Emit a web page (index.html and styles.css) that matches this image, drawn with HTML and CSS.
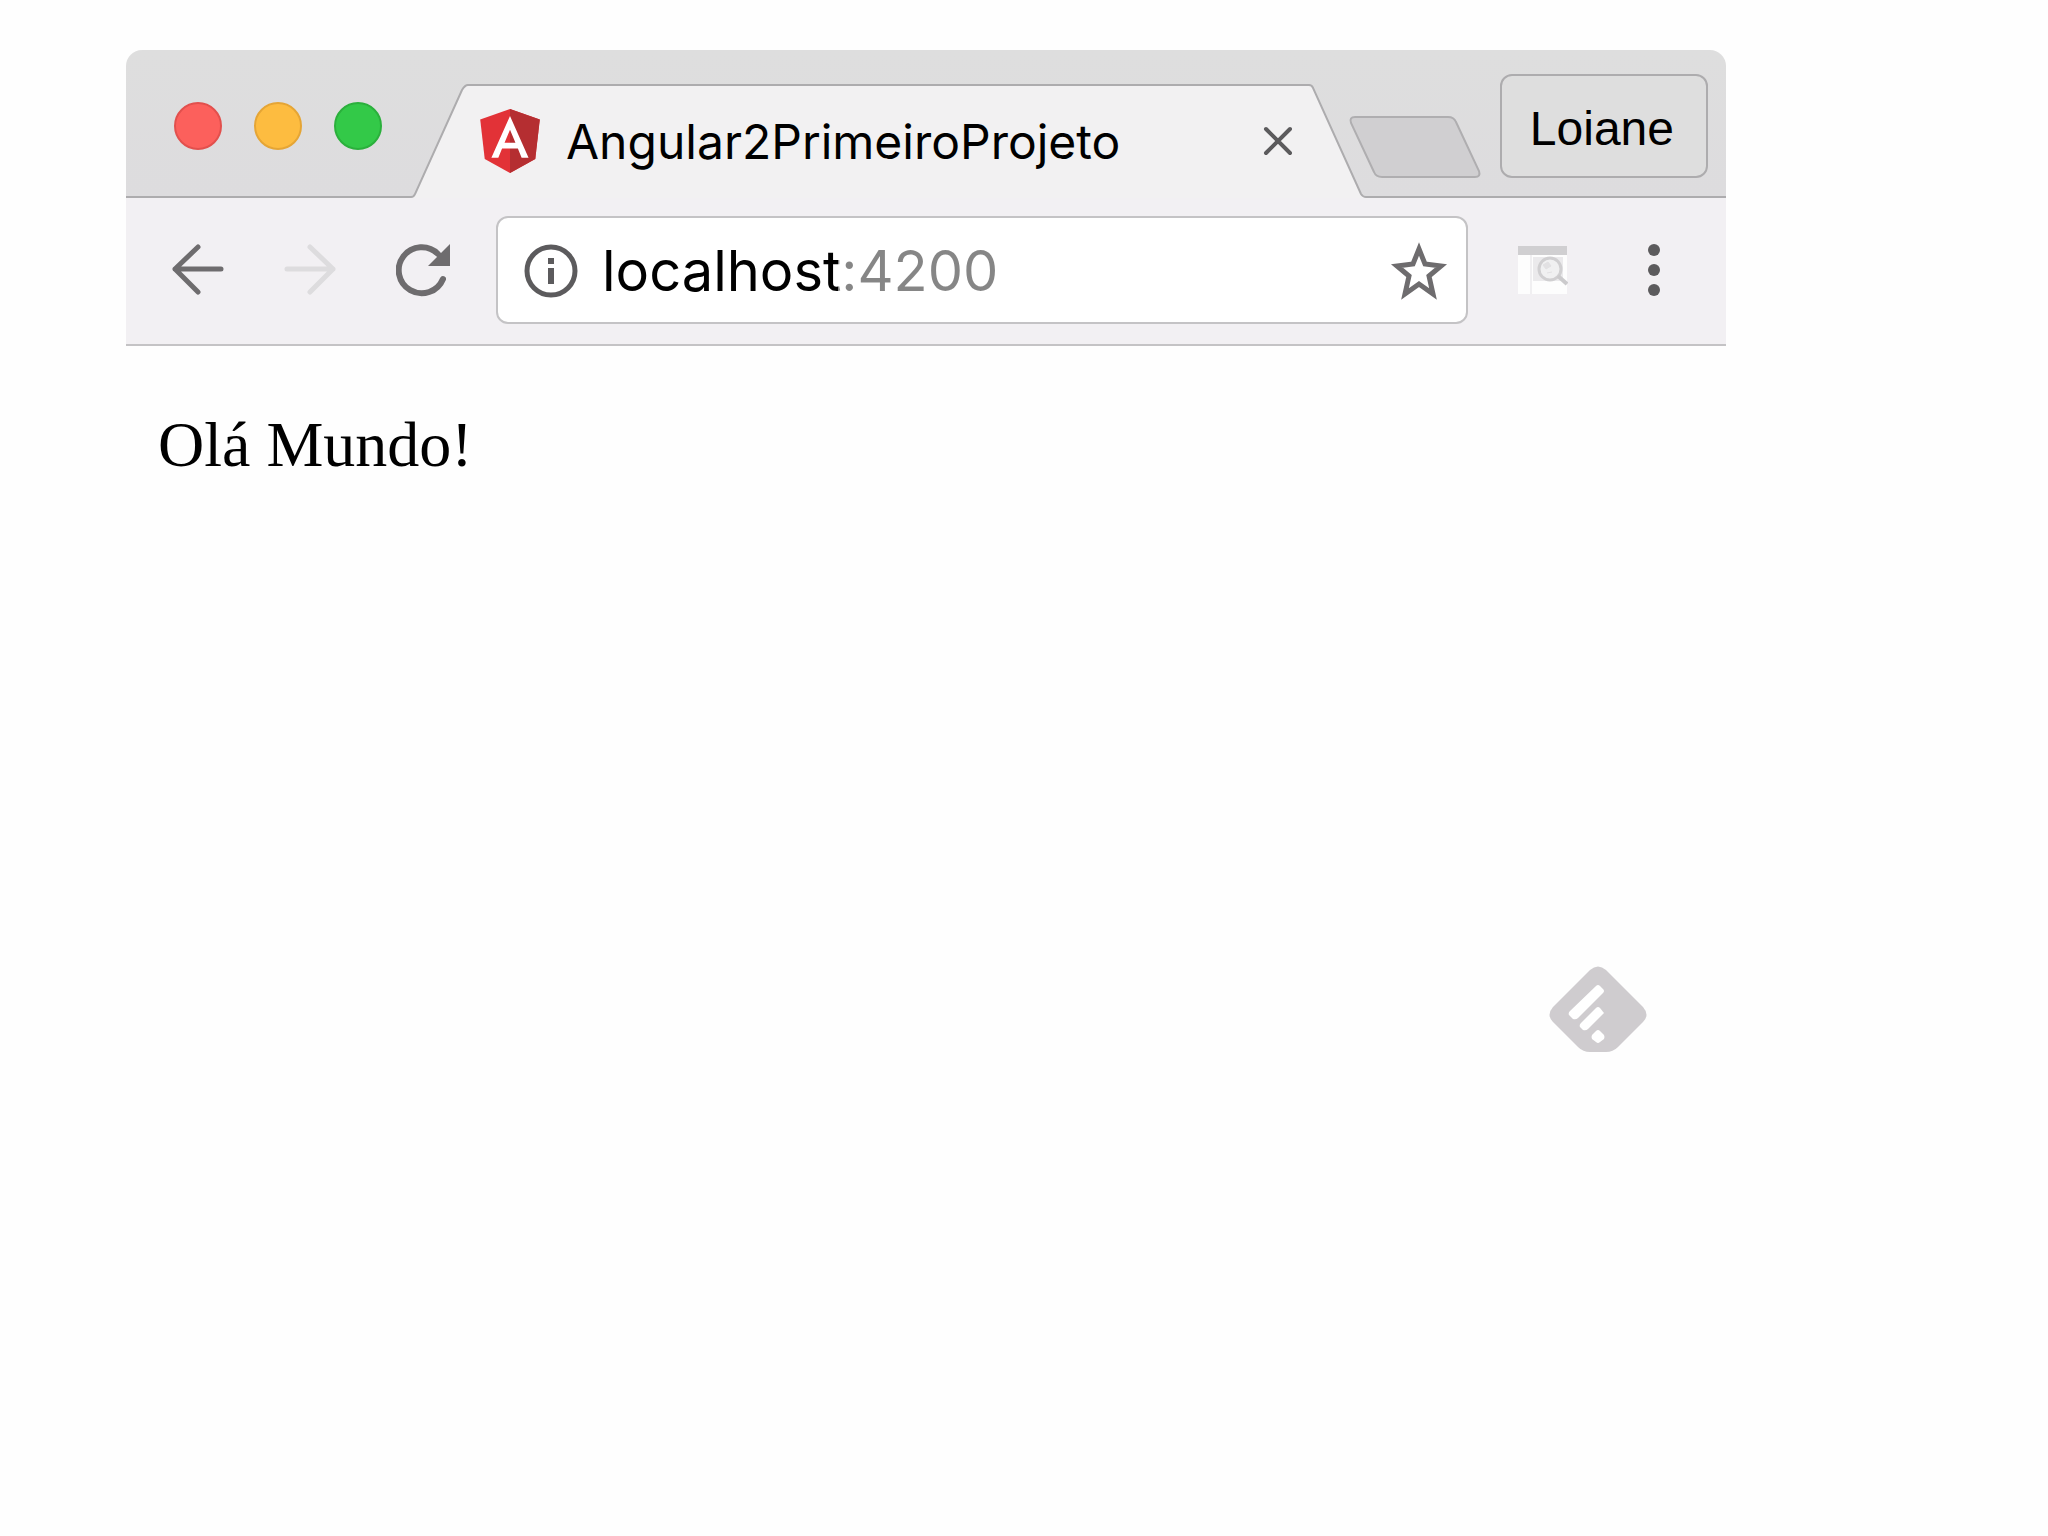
FILE: index.html
```html
<!DOCTYPE html>
<html lang="pt-BR">
<head>
  <meta charset="UTF-8">
  <meta name="viewport" content="width=device-width, initial-scale=1.0">
  <title>Angular2PrimeiroProjeto</title>
  <link rel="stylesheet" href="styles.css">
</head>
<body>
  <div class="window">
    <header class="tab-strip">
      <div class="lights">
        <button class="light red" aria-label="Fechar janela"></button>
        <button class="light yellow" aria-label="Minimizar"></button>
        <button class="light green" aria-label="Maximizar"></button>
      </div>
      <div class="tab">
        <svg class="tab-side" viewBox="0 0 57 114" aria-hidden="true">
          <path d="M0 114V112Q3 112 4 110L51 6Q54 1 57 1V114Z" fill="#f2f1f2"/>
          <path d="M0 113Q3 113 4 110L51 6Q54 1 57 1" fill="none" stroke="#adacae" stroke-width="2"/>
        </svg>
        <div class="tab-body">
          <svg class="tab-logo" viewBox="31 30 188 200" aria-hidden="true">
            <path fill="#e23237" d="M125 30L31.900 63.200l14.200 123.100L125 230l78.900-43.700 14.200-123.100z"/>
            <path fill="#b52e31" d="M125 30v200l78.900-43.700 14.200-123.100z"/>
            <path fill="#fff" d="M125 52.100L66.800 182.600h21.700l11.700-29.200h49.400l11.700 29.200H183L125 52.100zm17 83.300h-34l17-40.900z"/>
          </svg>
          <span class="tab-title">Angular2PrimeiroProjeto</span>
          <button class="icon-button" aria-label="Fechar aba">
            <svg width="32" height="32" viewBox="0 0 32 32"><path d="M4 4L28 28M28 4L4 28" stroke="#5c5b5d" stroke-width="4" stroke-linecap="round"/></svg>
          </button>
        </div>
        <svg class="tab-side" viewBox="0 0 57 114" aria-hidden="true">
          <path d="M57 114V112Q54 112 52 109L4 4Q3 1 0 1V114Z" fill="#f2f1f2"/>
          <path d="M57 113Q54 113 52 110L4 4Q3 1 0 1" fill="none" stroke="#adacae" stroke-width="2"/>
        </svg>
      </div>
      <button class="icon-button new-tab" aria-label="Nova aba">
        <svg width="134" height="64" viewBox="0 0 134 64"><path d="M7 2H100Q106 2 108 7L131 56Q133 62 127 62H34Q28 62 26 57L3 8Q1 2 7 2Z" fill="#d0cfd1" stroke="#afaeb0" stroke-width="2"/></svg>
      </button>
      <button class="profile">Loiane</button>
    </header>

    <nav class="toolbar">
      <button class="icon-button back" aria-label="Voltar">
        <svg width="52" height="52" viewBox="0 0 52 52"><path d="M49 25H3M26 3L3 25L26 48" fill="none" stroke="#6e6c6e" stroke-width="5" stroke-linecap="round" stroke-linejoin="round"/></svg>
      </button>
      <button class="icon-button forward" aria-label="Avançar" disabled>
        <svg width="52" height="52" viewBox="0 0 52 52"><path d="M3 25H49M26 3L49 25L26 48" fill="none" stroke="#dddcde" stroke-width="5" stroke-linecap="round" stroke-linejoin="round"/></svg>
      </button>
      <button class="icon-button reload" aria-label="Recarregar">
        <svg width="54" height="54" viewBox="0 0 54 54"><path d="M47 36A23 23 0 1 1 42 11" fill="none" stroke="#6e6c6e" stroke-width="6" stroke-linecap="round"/><path d="M54 1V23H32Z" fill="#6e6c6e"/></svg>
      </button>
      <div class="address">
        <svg width="54" height="54" viewBox="0 0 54 54" aria-hidden="true"><circle cx="27" cy="27" r="24" fill="none" stroke="#5c5b5d" stroke-width="5"/><path d="M24 14h6v6h-6zM24 24h6v16h-6z" fill="#5c5b5d"/></svg>
        <input class="url" type="text" value="localhost:4200" aria-label="Endereço" spellcheck="false">
        <button class="icon-button" aria-label="Favoritar">
          <svg width="58" height="58" viewBox="0 0 58 58"><path d="M29 7L35 22L51 24L39 34L43 52L29 42L15 52L19 34L7 24L23 22Z" fill="none" stroke="#6e6c6e" stroke-width="5"/></svg>
        </button>
      </div>
      <button class="icon-button extension" aria-label="Extensão">
        <svg width="50" height="48" viewBox="0 0 50 48">
          <path d="M0 9H49V48H0Z" fill="#fdfdfd"/>
          <path d="M0 0H49V9H0Z" fill="#d0cfd1"/>
          <path d="M13 9V48" stroke="#f0eff1" stroke-width="2"/>
          <path d="M15 11H45V35H15Z" fill="#ebeaec"/>
          <circle cx="32" cy="23" r="11" fill="#f0f0f1" stroke="#d0cfd1" stroke-width="3"/>
          <path d="M25 19l5-3 3 4-5 3zM29 27l5-1" fill="#e2e1e3" stroke="#e2e1e3"/>
          <path d="M40 30L49 38" stroke="#cbcacc" stroke-width="4"/>
        </svg>
      </button>
      <button class="icon-button menu" aria-label="Menu">
        <svg width="12" height="52" viewBox="0 0 12 52"><g fill="#5c5b5d"><circle cx="6" cy="6" r="6"/><circle cx="6" cy="26" r="6"/><circle cx="6" cy="46" r="6"/></g></svg>
      </button>
    </nav>

    <main class="page">
      <p>Olá Mundo!</p>
      <button class="icon-button feedly" aria-label="Feedly">
        <svg width="98" height="86" viewBox="0 0 98 86">
          <path d="M41 4Q49-3 57 4L94 41Q101 49 94 56L69 81Q64 86 57 86H41Q34 86 29 81L4 56Q-3 49 4 41Z" fill="#cfcccf"/>
          <g fill="#fff">
            <path d="M47 20Q49 18 51 20L54 23Q56 25 54 27L29 52Q27 54 24 53L20 49Q19 47 21 45Z"/>
            <path d="M47 42Q49 40 51 42L55 47L39 63Q37 65 34 64L31 61Q30 59 32 57Z"/>
            <path d="M47 65Q49 63 51 65L55 69Q56 71 55 73L51 76Q49 78 47 76L43 73Q42 71 43 69Z"/>
          </g>
        </svg>
      </button>
    </main>
  </div>
</body>
</html>
```
FILE: styles.css
```css
* {
  margin: 0;
  padding: 0;
  box-sizing: border-box;
}
body {
  background-color: #fefefe;
  color: #000;
}
button {
  cursor: pointer;
}
svg {
  display: block;
  flex: none;
}
.window {
  margin: 50px 322px 0 126px;
  border-radius: 16px;
  overflow: hidden;
}
.tab-strip {
  display: flex;
  align-items: center;
  height: 148px;
  padding: 6px 18px 0 48px;
  background: linear-gradient(#dedede, #dddcde);
  border-bottom: 2px solid #adacae;
}
.lights {
  display: flex;
  gap: 32px;
}
.light {
  width: 48px;
  height: 48px;
  border: 2px solid #e2504d;
  border-radius: 50%;
  background-color: #fc605c;
}
.yellow {
  border-color: #e5a535;
  background-color: #fdbc40;
}
.green {
  border-color: #2bb03c;
  background-color: #33c948;
}
.icon-button {
  flex: none;
  border: none;
  background: none;
}
.tab {
  display: flex;
  flex: 1;
  align-self: flex-end;
  position: relative;
  height: 114px;
  margin: 0 0 -2px 29px;
}
.tab-side {
  width: 57px;
  height: 114px;
}
.tab-body {
  display: flex;
  flex: 1;
  align-items: center;
  padding: 0 15px 2px 11px;
  border-top: 2px solid #adacae;
  background-color: #f2f1f2;
}
.tab-logo {
  width: 62px;
  height: 64px;
}
.tab-title {
  flex: 1;
  padding-left: 25px;
  font-family: Inter, sans-serif;
  font-size: 48px;
}
.new-tab {
  align-self: flex-end;
  margin: 0 18px 17px -18px;
}
.profile {
  height: 104px;
  padding: 4px 32px 0 28px;
  border: 2px solid #adacae;
  border-radius: 12px;
  background-color: #dedede;
  color: #000;
  font-family: "Liberation Sans", sans-serif;
  font-size: 48px;
}
.toolbar {
  display: flex;
  align-items: center;
  padding: 18px 66px 20px 46px;
  background-color: #f2f0f3;
  border-bottom: 2px solid #c4c3c5;
}
.forward {
  margin: 0 60px;
}
.address {
  display: flex;
  flex: 1;
  align-items: center;
  min-width: 0;
  height: 108px;
  margin: 0 50px 0 46px;
  padding: 2px 18px 0 26px;
  border: 2px solid #c4c3c5;
  border-radius: 12px;
  background-color: #fff;
}
.url {
  flex: 1;
  width: 100%;
  min-width: 0;
  margin-left: 24px;
  border: none;
  outline: none;
  /* host in black, port in grey */
  background: linear-gradient(to right, #000 236px, #868686 236px) text;
  color: transparent;
  font-family: Inter, sans-serif;
  font-size: 56px;
}
.extension {
  margin-right: 80px;
}
.page {
  position: relative;
  min-height: 792px;
  padding: 62px 32px;
  font-family: "Liberation Serif", serif;
  font-size: 64px;
}
.feedly {
  position: absolute;
  right: 79px;
  bottom: 86px;
}
```
